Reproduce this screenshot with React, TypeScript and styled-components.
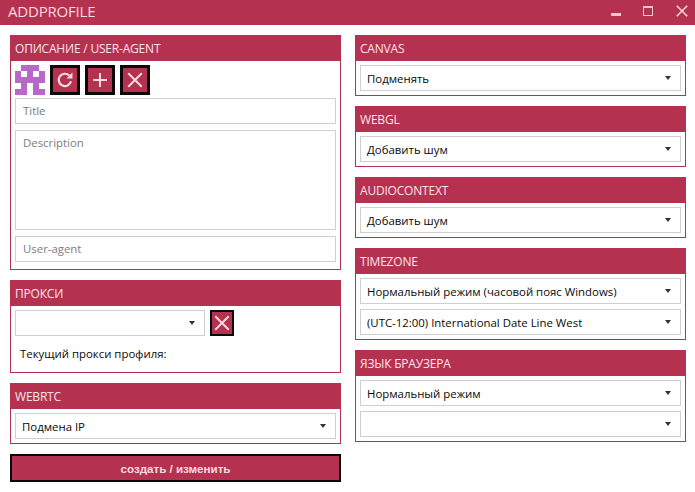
import React from "react";
import styled, { createGlobalStyle } from "styled-components";

const Global = createGlobalStyle`
  html, body { margin: 0; padding: 0; background: #fff; }
  body { font-family: "Open Sans", "Noto Sans", sans-serif; font-size: 11.4px; color: #0a0a0a; }
  * { box-sizing: border-box; }
`;

const Win = styled.div`
  width: 695px; height: 492px; background: #fff; display: flex; flex-direction: column; overflow: hidden;
`;
const TitleBar = styled.div`
  height: 25px; flex: none; background: #b43250; color: #fbdbe2; display: flex; align-items: center;
  padding: 0 0 0 8px; font-size: 15px; letter-spacing: -0.2px;
`;
const TitleText = styled.span`flex: 1; padding-bottom: 3px;`;
const WinBtns = styled.div`display: flex; gap: 22px; padding: 0 6px 3px 0; align-items: center;`;
const Columns = styled.div`
  display: grid; grid-template-columns: 331px 331px; column-gap: 14px; padding: 10px 0 0 10px;
`;
const Col = styled.div`display: flex; flex-direction: column; gap: 10px;`;
const Panel = styled.section`border: 1px solid #b43250; border-top: 0; background: #fff;`;
const PanelHead = styled.h3`
  margin: 0 -1px; height: 26px; background: #b43250; color: #fde3e9; font-size: 12px; font-weight: 500;
  display: flex; align-items: center; padding: 0 5px; letter-spacing: -0.2px;
`;
const Body = styled.div<{ $pb?: number; $gap?: number }>`
  padding: 4px 4px ${(p) => p.$pb ?? 4}px; display: flex; flex-direction: column; gap: ${(p) => p.$gap ?? 5}px;
`;
const IconRow = styled.div`display: flex; gap: 5px; height: 30px; margin-bottom: -3px;`;
const IconBtn = styled.button`
  width: 30px; height: 30px; padding: 0; background: #b43250; border: 3px solid #0c0708; display: flex;
  align-items: center; justify-content: center; flex: none;
`;
const Field = styled.input`
  height: 26px; width: 100%; border: 1px solid #cfcfcf; padding: 0 7px 2px; font: inherit; color: #111; outline: 0;
  &::placeholder { color: #7c7c7c; opacity: 1; }
`;
const Area = styled.textarea`
  height: 100px; width: 100%; border: 1px solid #cfcfcf; padding: 4px 7px; font: inherit; resize: none; outline: 0;
  display: block;
  &::placeholder { color: #7c7c7c; opacity: 1; }
`;
const Select = styled.div<{ $w?: number }>`
  height: 26px; ${(p) => (p.$w ? `width: ${p.$w}px;` : "width: 100%;")} border: 1px solid #cfcfcf; display: flex;
  align-items: center; padding: 0 9px 0 6px; color: #0a0a0a; background: #fff; flex: none;
  &::after { content: ""; margin-left: auto; border: 3.5px solid transparent; border-top: 4px solid #333; border-bottom: 0; }
`;
const ProxyRow = styled.div`display: flex; gap: 5px; align-items: flex-start; height: 26px;`;
const SmallBtn = styled(IconBtn)`width: 24px; height: 26px; border-width: 2px;`;
const Note = styled.div`height: 36px; display: flex; align-items: center; padding: 0 5px 2px;`;
const Submit = styled.button`
  height: 28px; width: 100%; background: #b43250; border: 2px solid #0c0708; color: #f8dbe2;
  font-family: "Liberation Sans", Arial, sans-serif; font-size: 11.6px; font-weight: 700;
`;

const X = ({ s = 18 }: { s?: number }) => (
  <svg width={s} height={s} viewBox="0 0 16 16"><path d="M2 2 L14 14 M14 2 L2 14" stroke="#fbdbe2" strokeWidth="1.7" fill="none" /></svg>
);
const Plus = () => (
  <svg width="16" height="16" viewBox="0 0 16 16"><path d="M8 1 V15 M1 8 H15" stroke="#fbdbe2" strokeWidth="2" fill="none" /></svg>
);
const Refresh = () => (
  <svg width="18" height="18" viewBox="0 0 16 16">
    <path d="M13.3 9.2 A5.5 5.5 0 1 1 11.8 4" stroke="#fbdbe2" strokeWidth="1.9" fill="none" />
    <path d="M9.3 6.6 H14.6 V1.4 Z" fill="#fbdbe2" />
  </svg>
);
const rects = [
  [1,0],[2,0],[3,0],
  [0,1],[2,1],[4,1],
  [0,2],[1,2],[2,2],[3,2],[4,2],
  [1,3],[3,3],
  [0,4],[1,4],[3,4],[4,4],
];
const Avatar = () => (
  <svg width="30" height="30" viewBox="0 0 5 5" shapeRendering="crispEdges">
    {rects.map(([x, y]) => <rect key={`${x}-${y}`} x={x} y={y} width="1" height="1" fill="#b868c8" />)}
  </svg>
);

export default function App() {
  return (
    <Win>
      <Global />
      <TitleBar>
        <TitleText>ADDPROFILE</TitleText>
        <WinBtns>
          <svg width="10" height="10" viewBox="0 0 10 10"><rect x="0" y="7" width="10" height="3" fill="#fbc4d0" /></svg>
          <svg width="10" height="10" viewBox="0 0 10 10"><rect x=".5" y=".5" width="9" height="9" fill="none" stroke="#fbc4d0" /><rect x="0" y="0" width="10" height="2" fill="#fbc4d0" /></svg>
          <X s={14} />
        </WinBtns>
      </TitleBar>
      <Columns>
        <Col>
          <Panel>
            <PanelHead>ОПИСАНИЕ / USER-AGENT</PanelHead>
            <Body $pb={7} $gap={6}>
              <IconRow>
                <Avatar />
                <IconBtn><Refresh /></IconBtn>
                <IconBtn><Plus /></IconBtn>
                <IconBtn><X /></IconBtn>
              </IconRow>
              <Field placeholder="Title" />
              <Area placeholder="Description" />
              <Field placeholder="User-agent" />
            </Body>
          </Panel>
          <Panel>
            <PanelHead>ПРОКСИ</PanelHead>
            <Body $pb={0} $gap={0}>
              <ProxyRow>
                <Select $w={190} />
                <SmallBtn><X /></SmallBtn>
              </ProxyRow>
              <Note>Текущий прокси профиля:</Note>
            </Body>
          </Panel>
          <Panel>
            <PanelHead>WEBRTC</PanelHead>
            <Body><Select>Подмена IP</Select></Body>
          </Panel>
          <Submit>создать / изменить</Submit>
        </Col>
        <Col>
          <Panel>
            <PanelHead>CANVAS</PanelHead>
            <Body><Select>Подменять</Select></Body>
          </Panel>
          <Panel>
            <PanelHead>WEBGL</PanelHead>
            <Body><Select>Добавить шум</Select></Body>
          </Panel>
          <Panel>
            <PanelHead>AUDIOCONTEXT</PanelHead>
            <Body><Select>Добавить шум</Select></Body>
          </Panel>
          <Panel>
            <PanelHead>TIMEZONE</PanelHead>
            <Body>
              <Select>Нормальный режим (часовой пояс Windows)</Select>
              <Select>(UTC-12:00) International Date Line West</Select>
            </Body>
          </Panel>
          <Panel>
            <PanelHead>ЯЗЫК БРАУЗЕРА</PanelHead>
            <Body>
              <Select>Нормальный режим</Select>
              <Select />
            </Body>
          </Panel>
        </Col>
      </Columns>
    </Win>
  );
}
